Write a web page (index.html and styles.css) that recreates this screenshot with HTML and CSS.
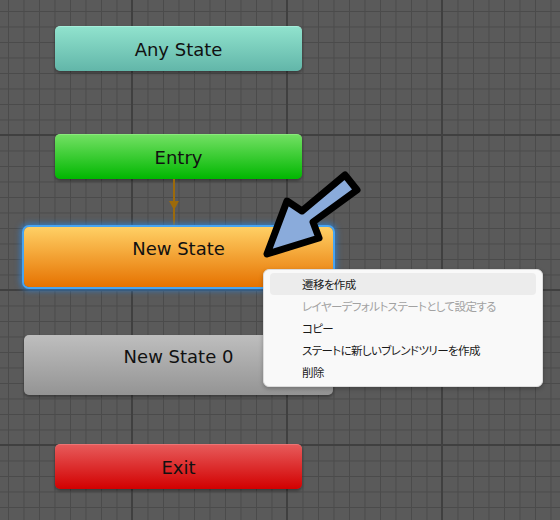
FILE: index.html
```html
<!DOCTYPE html>
<html lang="ja">
<head>
  <meta charset="UTF-8">
  <title>Animator</title>
  <link rel="stylesheet" href="styles.css">
</head>
<body>
  <div class="graph">
    <div class="node any">Any State</div>
    <div class="node entry">Entry</div>
    <!-- Entry から New State への遷移 -->
    <div class="link"><span class="link-head"></span></div>
    <div class="node big default selected">New State</div>
    <div class="node big normal">New State 0</div>
    <div class="node exit">Exit</div>

    <svg class="pointer" width="560" height="520" viewBox="0 0 560 520">
      <polygon points="345,175 357,190 313,222 319,238 267,254 287,201 302,211"
               fill="#8aabdb" stroke="#000" stroke-width="7" stroke-linejoin="round"/>
    </svg>

    <ul class="menu">
      <li class="hover">遷移を作成</li>
      <li class="disabled">レイヤーデフォルトステートとして設定する</li>
      <li>コピー</li>
      <li>ステートに新しいブレンドツリーを作成</li>
      <li>削除</li>
    </ul>
  </div>
</body>
</html>
```

FILE: styles.css
```css
/* リセット */
body{
  margin:0;
  font-family:"DejaVu Sans",sans-serif;
}
.graph{
  width:560px;
  height:520px;
  position:relative;
  overflow:hidden;
  background-color:#5a5a5a;
  background-image:
    linear-gradient(to right,#404040 2px,transparent 2px),
    linear-gradient(to bottom,#404040 2px,transparent 2px),
    linear-gradient(to right,#4b4b4b 1px,transparent 1px),
    linear-gradient(to bottom,#4b4b4b 1px,transparent 1px);
  background-size:155px 155px,155px 155px,15.5px 15.5px,15.5px 15.5px;
  background-position:131px 134px,131px 134px,8px 11px,8px 11px;
}
/* ステートノード */
.node{
  position:absolute;
  left:55px;
  width:247px;
  height:44px;
  border-radius:5px;
  display:flex;
  align-items:center;
  justify-content:center;
  font-size:18px;
  color:#111;
  box-shadow:0 2px 3px rgba(0,0,0,.35);
}
.node.big{
  left:24px;
  width:309px;
  height:49px;
  padding-top:11px;
  align-items:flex-start;
}
.any{
  top:26px;
  background:linear-gradient(#90e2cd,#62b6a9);
  border-top:1px solid #a6eedb;
}
.entry{
  top:134px;
  background:linear-gradient(#72e063,#00b700);
  border-top:1px solid #8aea7c;
}
.default{
  top:227px;
  background:linear-gradient(#ffd065,#e67200);
}
.selected{
  box-shadow:0 0 0 2px #47a4f2,0 0 6px 3px #2f7fcf;
}
.normal{
  top:335px;
  background:linear-gradient(#bebebe,#949494);
}
.exit{
  top:444px;
  background:linear-gradient(#e75a5a,#d20000);
  border-top:1px solid #ee7474;
}
/* 遷移の矢印 */
.link{
  position:absolute;
  left:173px;
  top:179px;
  width:2px;
  height:48px;
  background:#9c6a0a;
}
.link-head{
  position:absolute;
  left:-4px;
  top:22px;
  border-left:5px solid transparent;
  border-right:5px solid transparent;
  border-top:9px solid #9c6a0a;
}
.pointer{
  position:absolute;
  left:0;
  top:0;
}
/* コンテキストメニュー */
.menu{
  position:absolute;
  left:263px;
  top:269px;
  width:266px;
  margin:0;
  padding:3px 6px;
  list-style:none;
  background:#f9f9f9;
  border:1px solid #dcdcdc;
  border-radius:6px;
  box-shadow:0 2px 4px rgba(0,0,0,.25);
  font-family:"Noto Sans CJK JP",sans-serif;
  font-feature-settings:"palt";
  font-size:11.5px;
  letter-spacing:-0.6px;
  color:#1a1a1a;
}
.menu li{
  height:22px;
  line-height:22px;
  padding-left:32px;
  border-radius:4px;
}
.menu li.hover{
  background:#ececec;
}
.menu li.disabled{
  color:#a2a2a2;
}
```
